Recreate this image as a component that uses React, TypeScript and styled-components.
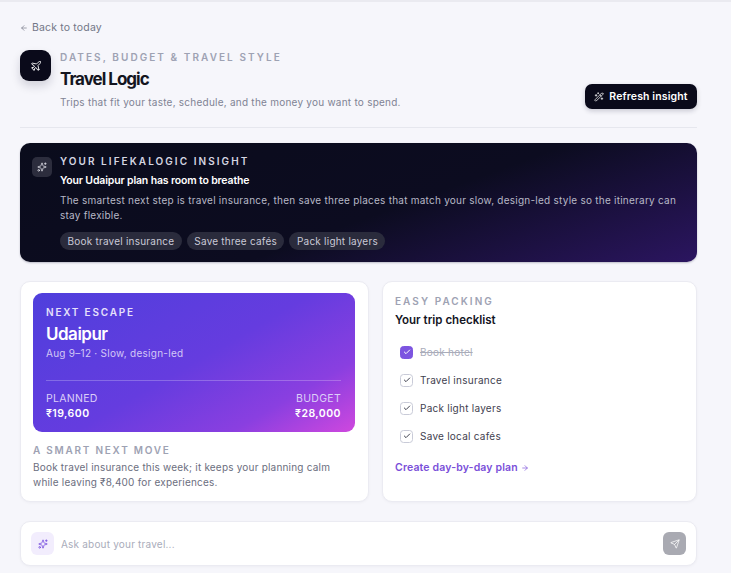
import React from "react";
import styled, { createGlobalStyle } from "styled-components";
import { ArrowLeft, ArrowRight, Check, Plane, Send, Sparkles, WandSparkles } from "lucide-react";

const GlobalStyle = createGlobalStyle`
  html, body {
    margin: 0;
    padding: 0;
    height: 100%;
    overflow: hidden;
    background: #f6f6fb;
  }
  * {
    box-sizing: border-box;
  }
  body {
    font-family: Inter, "Liberation Sans", sans-serif;
    color: #14151f;
  }
`;

const Page = styled.div`
  width: 731px;
  height: 573px;
  border-top: 2px solid #eaeaf0;
  padding: 19px 34px 0 20px;
  display: flex;
  flex-direction: column;
`;

const BackLink = styled.a`
  display: flex;
  align-items: center;
  gap: 4px;
  height: 13px;
  font-size: 10.5px;
  letter-spacing: 0.16px;
  color: #737687;
`;

const Header = styled.header`
  margin-top: 16px;
  display: flex;
  align-items: flex-start;
  height: 78px;
  border-bottom: 1px solid #e6e7ee;
`;

const HeaderIcon = styled.div`
  width: 31px;
  height: 31px;
  flex: none;
  border-radius: 9px;
  background: #0a0a1a;
  color: #fff;
  display: flex;
  align-items: center;
  justify-content: center;
  box-shadow: 0 5px 10px rgba(20, 20, 50, 0.16);
`;

const HeaderText = styled.div`
  margin-left: 9px;
  padding-top: 1px;
  flex: 1;
`;

const Eyebrow = styled.div<{ $color?: string }>`
  font-size: 10px;
  line-height: 12px;
  font-weight: 600;
  letter-spacing: 2.06px;
  text-transform: uppercase;
  color: ${(p) => p.$color || "#9ea2b3"};
`;

const Title = styled.h1`
  margin: 5px 0 0;
  font-size: 17px;
  line-height: 22px;
  font-weight: 700;
  letter-spacing: -1px;
  color: #14151f;
`;

const Subtitle = styled.p`
  margin: 5px 0 0;
  font-size: 10px;
  line-height: 14px;
  letter-spacing: 0.24px;
  color: #808394;
`;

const RefreshButton = styled.button`
  margin-top: 34px;
  width: 112px;
  height: 25px;
  flex: none;
  border: 0;
  border-radius: 7px;
  padding: 0;
  background: #0a0a1a;
  color: #fff;
  font-family: inherit;
  font-size: 10.5px;
  font-weight: 600;
  letter-spacing: 0.13px;
  display: flex;
  align-items: center;
  justify-content: center;
  gap: 5px;
  box-shadow: 0 2px 5px rgba(20, 20, 50, 0.2);
`;

const InsightCard = styled.section`
  margin-top: 15px;
  height: 119px;
  border-radius: 10px;
  padding: 12px 20px 0 12px;
  display: flex;
  gap: 8px;
  background: linear-gradient(160deg, #0a0c1c 0%, #0c0c20 55%, #2b1560 100%);
  box-shadow: 0 1px 2px rgba(20, 20, 50, 0.25);
`;

const InsightIcon = styled.div`
  width: 20px;
  height: 20px;
  margin-top: 2px;
  flex: none;
  border-radius: 5px;
  background: #2c2d3d;
  color: #e4e4ec;
  display: flex;
  align-items: center;
  justify-content: center;
`;

const InsightBody = styled.div`
  flex: 1;
`;

const InsightTitle = styled.div`
  margin-top: 7px;
  font-size: 10.5px;
  line-height: 14px;
  font-weight: 600;
  letter-spacing: -0.15px;
  color: #fff;
`;

const InsightText = styled.p`
  margin: 5px 0 0;
  font-size: 10px;
  line-height: 15px;
  letter-spacing: 0.24px;
  color: #b7b8c6;
`;

const Chips = styled.div`
  margin-top: 9px;
  display: flex;
  gap: 5px;
`;

const Chip = styled.span`
  height: 18px;
  padding: 0 7.5px;
  border-radius: 9px;
  background: #2a2b3c;
  color: #c9c9d6;
  font-size: 10px;
  letter-spacing: 0.22px;
  display: flex;
  align-items: center;
`;

const Columns = styled.div`
  margin-top: 19px;
  height: 221px;
  display: grid;
  grid-template-columns: 349px 315px;
  gap: 13px;
`;

const Card = styled.section`
  background: #fff;
  border: 1px solid #ebebf2;
  border-radius: 10px;
  box-shadow: 0 1px 3px rgba(20, 20, 50, 0.04);
`;

const EscapeCard = styled(Card)`
  padding: 11px 13px 0 12px;
`;

const Hero = styled.div`
  height: 139px;
  border-radius: 9px;
  padding: 13px 14px 0 13px;
  background: linear-gradient(150deg, #4f3fdc 0%, #653cdf 50%, #8a3fe0 78%, #cf48de 100%);
  color: #fff;
`;

const HeroLabel = styled.div`
  font-size: 10px;
  line-height: 12px;
  font-weight: 600;
  letter-spacing: 1.8px;
  color: #e6e0fb;
`;

const HeroCity = styled.div`
  margin-top: 5px;
  font-size: 17px;
  line-height: 22px;
  font-weight: 600;
  letter-spacing: -0.5px;
`;

const HeroMeta = styled.div`
  margin-top: 1px;
  font-size: 10px;
  line-height: 14px;
  letter-spacing: 0.27px;
  color: #d3c8f6;
`;

const HeroDivider = styled.div`
  margin-top: 20px;
  height: 1px;
  background: rgba(255, 255, 255, 0.24);
`;

const HeroStats = styled.div`
  margin-top: 11px;
  display: flex;
  justify-content: space-between;
`;

const Stat = styled.div<{ $right?: boolean }>`
  text-align: ${(p) => (p.$right ? "right" : "left")};
`;

const StatLabel = styled.div`
  font-size: 10.5px;
  line-height: 14px;
  letter-spacing: 0.3px;
  color: #dccff8;
`;

const StatValue = styled.div`
  font-size: 10.5px;
  line-height: 15px;
  font-weight: 600;
  letter-spacing: 0.45px;
  color: #fff;
`;

const MoveLabel = styled(Eyebrow)`
  margin-top: 12px;
  letter-spacing: 1.75px;
`;

const MoveText = styled.p`
  margin: 4px 0 0;
  font-size: 10px;
  line-height: 15px;
  letter-spacing: 0.2px;
  color: #6b6e7e;
`;

const ChecklistCard = styled(Card)`
  padding: 13px 13px 0 12px;
`;

const ChecklistTitle = styled.h2`
  margin: 6px 0 0;
  font-size: 11.5px;
  line-height: 15px;
  font-weight: 600;
  color: #14151f;
`;

const Checklist = styled.ul`
  list-style: none;
  margin: 14px 0 0;
  padding: 0 0 0 5px;
  display: flex;
  flex-direction: column;
  gap: 8px;
`;

const CheckRow = styled.li<{ $done?: boolean }>`
  height: 20px;
  display: flex;
  align-items: center;
  gap: 7px;
  font-size: 10px;
  letter-spacing: 0.25px;
  color: ${(p) => (p.$done ? "#a9acba" : "#3f414f")};
  text-decoration: ${(p) => (p.$done ? "line-through" : "none")};
`;

const CheckBox = styled.span<{ $done?: boolean }>`
  width: 13px;
  height: 13px;
  flex: none;
  border-radius: 3.5px;
  border: 1px solid ${(p) => (p.$done ? "#7c54e0" : "#c9cbd8")};
  background: ${(p) => (p.$done ? "#7c54e0" : "#fff")};
  color: ${(p) => (p.$done ? "#fff" : "#3f414f")};
  display: flex;
  align-items: center;
  justify-content: center;
`;

const PlanLink = styled.a`
  margin-top: 15px;
  display: flex;
  align-items: center;
  gap: 3px;
  font-size: 10.5px;
  line-height: 14px;
  font-weight: 600;
  letter-spacing: 0.15px;
  color: #7a4fd9;
`;

const AskBar = styled.div`
  margin-top: 19px;
  height: 45px;
  background: #fff;
  border: 1px solid #ebebf2;
  border-radius: 10px;
  padding: 0 10px;
  display: flex;
  align-items: center;
  box-shadow: 0 1px 3px rgba(20, 20, 50, 0.04);
`;

const AskIcon = styled.div`
  width: 23px;
  height: 23px;
  flex: none;
  border-radius: 6px;
  background: #f2edfd;
  color: #7c54e0;
  display: flex;
  align-items: center;
  justify-content: center;
`;

const AskInput = styled.input`
  flex: 1;
  margin-left: 7px;
  border: 0;
  outline: 0;
  padding: 0;
  background: transparent;
  font-family: inherit;
  font-size: 10px;
  letter-spacing: 0.2px;
  color: #14151f;

  &::placeholder {
    color: #a9acba;
    opacity: 1;
  }
`;

const SendButton = styled.button`
  width: 23px;
  height: 23px;
  flex: none;
  border: 0;
  border-radius: 6px;
  padding: 0;
  background: #a9aab2;
  color: #fff;
  display: flex;
  align-items: center;
  justify-content: center;
`;

const checklist = [
  { label: "Book hotel", done: true },
  { label: "Travel insurance", done: false },
  { label: "Pack light layers", done: false },
  { label: "Save local cafés", done: false },
];

const chips = ["Book travel insurance", "Save three cafés", "Pack light layers"];

export default function App() {
  return (
    <Page>
      <GlobalStyle />
      <BackLink>
        <ArrowLeft size={8} strokeWidth={2} />
        Back to today
      </BackLink>

      <Header>
        <HeaderIcon>
          <Plane size={12} strokeWidth={1.8} />
        </HeaderIcon>
        <HeaderText>
          <Eyebrow>Dates, budget &amp; travel style</Eyebrow>
          <Title>Travel Logic</Title>
          <Subtitle>Trips that fit your taste, schedule, and the money you want to spend.</Subtitle>
        </HeaderText>
        <RefreshButton>
          <WandSparkles size={10} strokeWidth={1.8} />
          Refresh insight
        </RefreshButton>
      </Header>

      <InsightCard>
        <InsightIcon>
          <Sparkles size={10} strokeWidth={1.8} />
        </InsightIcon>
        <InsightBody>
          <Eyebrow $color="#d5d6e2">Your LifekaLogic insight</Eyebrow>
          <InsightTitle>Your Udaipur plan has room to breathe</InsightTitle>
          <InsightText>
            The smartest next step is travel insurance, then save three places that match your slow,
            design-led style so the itinerary can stay flexible.
          </InsightText>
          <Chips>
            {chips.map((chip) => (
              <Chip key={chip}>{chip}</Chip>
            ))}
          </Chips>
        </InsightBody>
      </InsightCard>

      <Columns>
        <EscapeCard>
          <Hero>
            <HeroLabel>NEXT ESCAPE</HeroLabel>
            <HeroCity>Udaipur</HeroCity>
            <HeroMeta>Aug 9–12 · Slow, design-led</HeroMeta>
            <HeroDivider />
            <HeroStats>
              <Stat>
                <StatLabel>PLANNED</StatLabel>
                <StatValue>₹19,600</StatValue>
              </Stat>
              <Stat $right>
                <StatLabel>BUDGET</StatLabel>
                <StatValue>₹28,000</StatValue>
              </Stat>
            </HeroStats>
          </Hero>
          <MoveLabel>A smart next move</MoveLabel>
          <MoveText>
            Book travel insurance this week; it keeps your planning calm
            <br />
            while leaving ₹8,400 for experiences.
          </MoveText>
        </EscapeCard>

        <ChecklistCard>
          <Eyebrow>Easy packing</Eyebrow>
          <ChecklistTitle>Your trip checklist</ChecklistTitle>
          <Checklist>
            {checklist.map((item) => (
              <CheckRow key={item.label} $done={item.done}>
                <CheckBox $done={item.done}>
                  <Check size={8} strokeWidth={3} />
                </CheckBox>
                {item.label}
              </CheckRow>
            ))}
          </Checklist>
          <PlanLink>
            Create day-by-day plan
            <ArrowRight size={8} strokeWidth={2} />
          </PlanLink>
        </ChecklistCard>
      </Columns>

      <AskBar>
        <AskIcon>
          <Sparkles size={10} strokeWidth={2} />
        </AskIcon>
        <AskInput placeholder="Ask about your travel..." />
        <SendButton aria-label="Send">
          <Send size={10} strokeWidth={1.8} />
        </SendButton>
      </AskBar>
    </Page>
  );
}
